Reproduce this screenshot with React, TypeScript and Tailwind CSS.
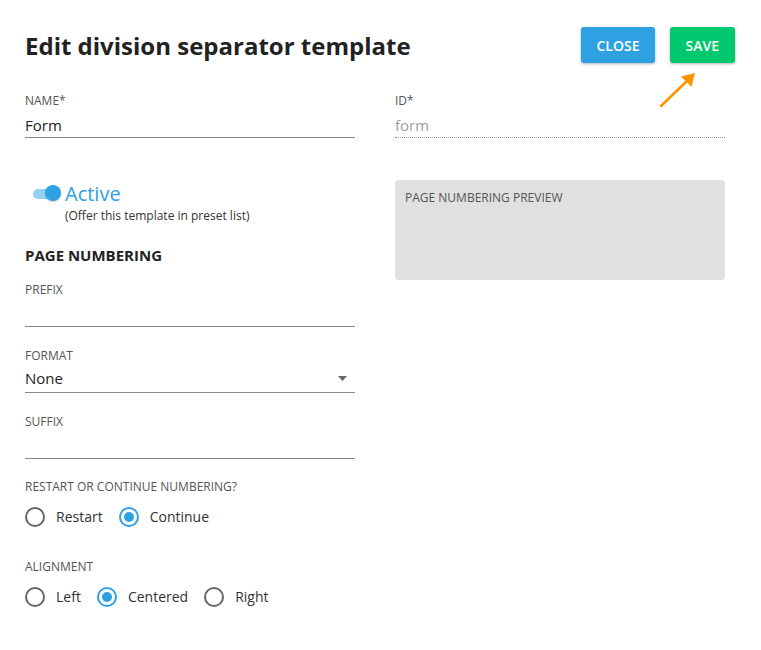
import React, { useState } from 'react'

const font = { fontFamily: '"Open Sans", "Liberation Sans", sans-serif' }

interface RadioGroupProps {
  options: string[]
  value: string
  onChange: (v: string) => void
}

function RadioGroup({ options, value, onChange }: RadioGroupProps) {
  return (
    <div className="flex items-center gap-[16px]">
      {options.map((opt) => {
        const checked = opt === value
        return (
          <button
            key={opt}
            type="button"
            className="flex items-center gap-[11px] h-5"
            onClick={() => onChange(opt)}
          >
            <span
              className={
                checked
                  ? 'w-5 h-5 rounded-full border-2 border-[#2ea1e3] flex items-center justify-center'
                  : 'w-5 h-5 rounded-full border-2 border-[#666666] flex items-center justify-center'
              }
            >
              {checked && <span className="w-[10px] h-[10px] rounded-full bg-[#2ea1e3]" />}
            </span>
            <span className="text-[14px] leading-5 text-[#333333]">{opt}</span>
          </button>
        )
      })}
    </div>
  )
}

export default function App() {
  const [active, setActive] = useState(true)
  const [restart, setRestart] = useState('Continue')
  const [align, setAlign] = useState('Centered')

  return (
    <div className="relative w-[761px] h-[650px] bg-white text-[#222]" style={font}>
      {/* Header */}
      <div className="flex items-start justify-between pl-[25px] pr-[26px] pt-[27px]">
        <h1 className="text-[24px] leading-9 font-bold text-[#222222] mt-[1px]">Edit division separator template</h1>
        <div className="flex gap-[15px]">
          <button className="h-9 px-[15px] rounded-[3px] bg-[#2ea1e3] text-white text-[14px] font-semibold shadow-[0_1px_3px_rgba(0,0,0,0.3)]">
            CLOSE
          </button>
          <button className="h-9 px-4 rounded-[3px] bg-[#00c86e] text-white text-[14px] font-semibold shadow-[0_1px_3px_rgba(0,0,0,0.3)]">
            SAVE
          </button>
        </div>
      </div>

      {/* Annotation arrow */}
      <svg className="absolute left-[655px] top-[68px]" width="45" height="45" viewBox="0 0 45 45">
        <line x1="6" y1="38" x2="32" y2="13" stroke="#ff9400" strokeWidth="2.5" strokeLinecap="round" />
        <polygon points="40,5 36.5,19 26,8.5" fill="#ff9400" />
      </svg>

      <div className="flex gap-10 px-[25px] mt-[29px]">
        {/* Left column */}
        <div className="w-[330px] flex flex-col">
          <label className="text-[12px] leading-4 text-[#555555]">NAME*</label>
          <div className="pt-1 border-b border-[#888888]">
            <div className="text-[15px] leading-6 text-[#222222]">Form</div>
          </div>

          <div className="mt-[43px] flex items-center">
            <button
              type="button"
              onClick={() => setActive(!active)}
              className="relative w-[32px] h-[26px] flex items-center ml-[8px]"
            >
              <span className="w-[24px] h-[10px] rounded-full bg-[#93d1f2]" />
              <span className="absolute left-[12px] top-[4px] w-[16px] h-[16px] rounded-full bg-[#2ea1e3] shadow-[0_1px_2px_rgba(0,0,0,0.2)]" />
            </button>
            <span className="text-[20px] leading-[26px] text-[#2ea1e3]">Active</span>
          </div>
          <div className="ml-[40px] mt-[1px] text-[12px] leading-4 text-[#333333]">(Offer this template in preset list)</div>

          <h2 className="mt-[21px] text-[15px] leading-5 font-bold text-[#222222]">PAGE NUMBERING</h2>

          <label className="mt-[17px] text-[12px] leading-4 text-[#555555]">PREFIX</label>
          <div className="h-[29px] border-b border-[#888888]" />

          <label className="mt-[21px] text-[12px] leading-4 text-[#555555]">FORMAT</label>
          <div className="h-[29px] border-b border-[#888888] flex items-center justify-between">
            <span className="text-[15px] leading-6 text-[#222222]">None</span>
            <svg width="9" height="5" viewBox="0 0 9 5" className="mr-[8px]">
              <polygon points="0,0 9,0 4.5,5" fill="#666666" />
            </svg>
          </div>

          <label className="mt-[21px] text-[12px] leading-4 text-[#555555]">SUFFIX</label>
          <div className="h-[29px] border-b border-[#888888]" />

          <label className="mt-[20px] text-[12px] leading-4 text-[#555555]">RESTART OR CONTINUE NUMBERING?</label>
          <div className="mt-[12px]">
            <RadioGroup options={['Restart', 'Continue']} value={restart} onChange={setRestart} />
          </div>

          <label className="mt-[32px] text-[12px] leading-4 text-[#555555]">ALIGNMENT</label>
          <div className="mt-[12px]">
            <RadioGroup options={['Left', 'Centered', 'Right']} value={align} onChange={setAlign} />
          </div>
        </div>

        {/* Right column */}
        <div className="w-[330px] flex flex-col">
          <label className="text-[12px] leading-4 text-[#555555]">ID*</label>
          <div className="pt-1 border-b border-dotted border-[#999999]">
            <div className="text-[15px] leading-6 text-[#a0a0a0]">form</div>
          </div>

          <div className="mt-[42px] h-[100px] rounded-[4px] bg-[#e0e0e0] px-[10px] pt-[10px]">
            <div className="text-[12px] leading-4 text-[#555555]">PAGE NUMBERING PREVIEW</div>
          </div>
        </div>
      </div>
    </div>
  )
}
